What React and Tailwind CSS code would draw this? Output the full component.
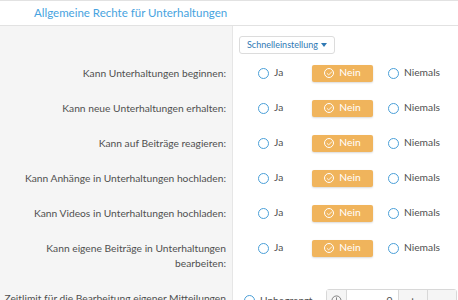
import { Check, Clock } from 'lucide-react'

const rows = [
    ['Kann Unterhaltungen beginnen:'],
    ['Kann neue Unterhaltungen erhalten:'],
    ['Kann auf Beiträge reagieren:'],
    ['Kann Anhänge in Unterhaltungen hochladen:'],
    ['Kann Videos in Unterhaltungen hochladen:'],
    ['Kann eigene Beiträge in Unterhaltungen', 'bearbeiten:'],
]

function Radio({ label }) {
    return (
        <span className="flex items-center gap-[5px]">
            <span className="w-[11px] h-[11px] rounded-full border-[1.5px] border-[#4a9fd8] bg-white" />
            <span>{label}</span>
        </span>
    )
}

function NeinButton() {
    return (
        <span className="w-[61px] h-[17px] rounded-[2px] bg-[#f0b45c] text-white flex items-center justify-center gap-[5px] shadow-[0_1px_2px_rgba(0,0,0,0.15)]">
            <span className="w-[10px] h-[10px] rounded-full border border-white flex items-center justify-center">
                <Check size={7} strokeWidth={3} />
            </span>
            Nein
        </span>
    )
}

export default function App() {
    return (
        <div className="w-[458px] h-[300px] overflow-hidden bg-white text-[10.25px] text-[#505050] font-['Lato',sans-serif]">
            <div className="h-[26px] border-t border-b border-[#e2e2e2] pl-[34px] flex items-center text-[11.5px] text-[#47a3e0]">
                Allgemeine Rechte für Unterhaltungen
            </div>

            <div className="flex">
                <div className="w-[233px] shrink-0 bg-[#f5f5f5] border-r border-[#e6e6e6] h-[29.5px]" />
                <div className="pl-[6px] pt-[10px]">
                    <span className="h-[18px] px-[7px] border border-[#dcdcdc] rounded-[3px] bg-white flex items-center gap-[3px] text-[#2f79b4] text-[9px]">
                        Schnelleinstellung
                        <svg width="6" height="4" viewBox="0 0 6 4"><path d="M0 0h6L3 4z" fill="#2f79b4" /></svg>
                    </span>
                </div>
            </div>

            {rows.map((lines, i) => (
                <div key={i} className="flex">
                    <div className="w-[233px] shrink-0 bg-[#f5f5f5] border-r border-[#e6e6e6] pr-[6px] py-[10px] text-right leading-[15px]">
                        {lines.map((l) => <div key={l}>{l}</div>)}
                    </div>
                    <div className="h-[35px] pl-[25px] flex items-center">
                        <div className="w-[54px]"><Radio label="Ja" /></div>
                        <NeinButton />
                        <div className="ml-[15px]"><Radio label="Niemals" /></div>
                    </div>
                </div>
            ))}

            <div className="flex">
                <div className="w-[233px] shrink-0 bg-[#f5f5f5] border-r border-[#e6e6e6] pr-[6px] py-[10px] text-right leading-[15px] whitespace-nowrap overflow-hidden flex justify-end">
                    <div>Zeitlimit für die Bearbeitung eigener Mitteilungen</div>
                </div>
                <div className="pl-[11px] pt-[8px] flex items-start gap-[13px]">
                    <div className="pt-[4px]"><Radio label="Unbegrenzt" /></div>
                    <div className="flex h-[24px] border border-[#d8d8d8] rounded-[3px] bg-white">
                        <span className="w-[20px] flex items-center justify-center border-r border-[#d8d8d8] bg-[#f5f5f5]">
                            <Clock size={11} strokeWidth={1.5} />
                        </span>
                        <span className="w-[51px] flex items-center justify-end pr-[5px]">0</span>
                        <span className="w-[29px] flex items-center justify-center border-l border-[#d8d8d8] bg-[#f5f5f5] text-[14px]">+</span>
                        <span className="w-[29px] flex items-center justify-center border-l border-[#d8d8d8] bg-[#f5f5f5] text-[14px]">−</span>
                    </div>
                </div>
            </div>
        </div>
    )
}
